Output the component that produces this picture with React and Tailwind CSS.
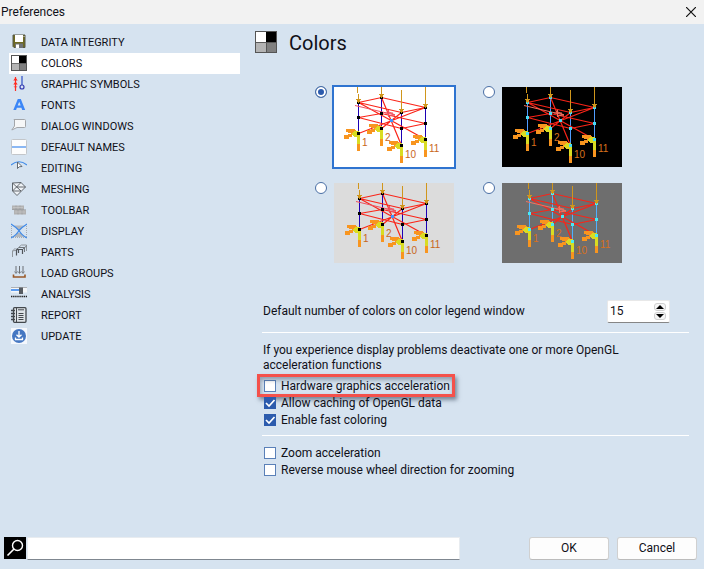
import { useState } from 'react'

function Glyph({ children, size = 16 }) {
  return (
    <svg width={size} height={size} viewBox="0 0 16 16" fill="none" aria-hidden="true" className="shrink-0">
      {children}
    </svg>
  )
}

const FloppyIcon = () => (
  <Glyph>
    <path d="M2 1h12v12.5H3L2 12.500z" fill="#6e6a22" stroke="#56584a" />
    <path d="M4 1h8v7H4z" fill="#fff" />
    <path d="M4 9.500h8V14H4z" fill="#6f7276" />
    <path d="M5 10.500h3V14H5z" fill="#fff" />
    <path d="M12.500 2h1v1h-1z" fill="#ddd" />
  </Glyph>
)

const SwatchIcon = ({ size, dark = '#808080', light = '#b4b4b4' }) => (
  <Glyph size={size}>
    <g shapeRendering="crispEdges">
      <path d="M0 0h16v16H0z" fill="#555" />
      <path d="M1 1h7v7H1z" fill="#fff" />
      <path d="M8 1h7v7H8z" fill="#000" />
      <path d="M1 8h7v7H1z" fill={light} />
      <path d="M8 8h7v7H8z" fill={dark} />
      <path d="M0 8h16M8 8v8" stroke="#555" strokeWidth=".7" />
    </g>
  </Glyph>
)

const SymbolsIcon = () => (
  <Glyph>
    <path d="M4.500 1v14" stroke="#ff2a20" strokeWidth="1.200" />
    <path d="M2.300 4.500 4.500 1.500l2.200 3zM2.300 8.500l2.200-3 2.200 3zM2.500 10.500l2 1.500 2-1.500z" fill="#ff2a20" />
    <path d="M11 0v9" stroke="#7189d6" strokeWidth="2" />
    <circle cx="11" cy="11" r="2" fill="#d8e4f5" stroke="#353bb0" strokeWidth="1.200" />
  </Glyph>
)

const FontIcon = () => (
  <Glyph>
    <path
      fillRule="evenodd"
      d="M2.300 13 6.800 2h3l4.400 11h-3l-.8-2.200H5.900L5.100 13zM6.700 8.600h3L8.200 4.700z"
      fill="#3b86f7"
    />
  </Glyph>
)

const BubbleIcon = () => (
  <Glyph>
    <path d="M3 1.500h10.500a1 1 0 0 1 1 1v6a1 1 0 0 1-1 1H6L.8 12l2.700-4V2z" fill="#f6f7f8" stroke="#a3a6aa" />
  </Glyph>
)

const NamesIcon = () => (
  <Glyph>
    <rect x=".5" y=".5" width="15" height="15" rx="1" fill="#fdfdfd" stroke="#c3c6ca" />
    <path d="M1 8h14" stroke="#8bb8f4" strokeWidth="2" />
  </Glyph>
)

const EditIcon = () => (
  <Glyph>
    <path d="M0 5Q8-1.500 16 5" stroke="#438de8" strokeWidth="1.200" />
    <path d="M6.500 2v6.500l1.700-1.700 2.800-.3z" fill="#fff" stroke="#555b63" strokeWidth=".9" />
  </Glyph>
)

const MeshIcon = () => (
  <Glyph>
    <path d="M2 2h8l4.500 4L6 14.500 1.500 10z" fill="#eef2f6" />
    <path
      d="M1.500 2 10 1.500 14.500 6 6 14.500 1.500 10zM1.500 2 10 10M10 1.500 1.500 10M5.500 6H14.500M2 10h8"
      stroke="#555a60"
      strokeWidth=".9"
    />
  </Glyph>
)

const ToolbarIcon = () => (
  <Glyph>
    <path d="M1 3.500h12V8h2v4.500H3V8H1z" fill="#b2b2b2" />
    <path d="M1 7.500h14M5 3.500v4M9 3.500v4M7 8v4.500M11 8v4.500" stroke="#8e9194" strokeWidth=".5" />
    <path d="M2 5.500h10M4 10h10" stroke="#c8c8c8" strokeWidth=".7" />
  </Glyph>
)

const DisplayIcon = () => (
  <Glyph>
    <path d="M3 2.500h10L9 7H7zM6 10h4l3 4H3z" fill="#b3b8be" />
    <path d="M.5 1v14M15.500 1v14" stroke="#a5abb2" strokeDasharray="1 1" />
    <path d="M0 14.500h16" stroke="#a5abb2" strokeDasharray="1 1" />
    <path d="M0 1Q5.500 4.500 8 7.500 10.500 4.500 16 1M0 15Q6 11.500 8 7.500 10 11.500 16 15" stroke="#3f8ae8" strokeWidth="1.200" />
  </Glyph>
)

const PartsIcon = () => (
  <Glyph>
    <path d="M1.500 13V7l5-1M1.500 7 4.500 4M8 3l2.500-2h5v6" stroke="#90969c" />
    <path d="M5.500 11.500V5.500h6V10M7.500 9V5" stroke="#50555a" strokeWidth="1.200" />
    <path d="M5 5.500 8 3.500h5.500V8M12 5l3.500-3" stroke="#6f757b" />
  </Glyph>
)

const LoadIcon = () => (
  <Glyph>
    <path d="M5 1v7M8.500 1v7M12 1v7" stroke="#6b6f74" />
    <path d="m3.500 6.500 1.500 2 1.500-2M7 6.500l1.500 2 1.500-2M10.500 6.500l1.500 2 1.500-2" stroke="#6b6f74" strokeWidth=".8" />
    <path d="M2.500 9.500V12h11.500V9.500" stroke="#9a5a28" strokeWidth="1.600" />
  </Glyph>
)

const AnalysisIcon = () => (
  <Glyph>
    <path d="M0 1.500h16v5H0z" fill="#f4f6f8" />
    <path d="M0 1.500h16" stroke="#aeb1b5" />
    <path d="M0 4h8" stroke="#5c9cf0" strokeWidth="2" />
    <path d="M8 1.500h4V8H8z" fill="#565b61" />
    <path d="M0 10.500h16" stroke="#222" strokeWidth="1.600" strokeDasharray="1.400 .7" />
  </Glyph>
)

const ReportIcon = () => (
  <Glyph>
    <rect x="2.500" y=".7" width="12.500" height="14.600" rx="1" fill="#dfe4e8" stroke="#43484d" strokeWidth="1.300" />
    <path d="M5.500 1v14" stroke="#43484d" />
    <path d="M7 2.800h6M7.500 6.500h5M7.500 8.500h5M7.500 10.500h5M7.500 12.500h5" stroke="#43484d" />
    <path d="M0 3.500h4M0 6.500h4M0 9.500h4M0 12.500h4" stroke="#43484d" strokeWidth="1.300" />
  </Glyph>
)

const UpdateIcon = () => (
  <Glyph>
    <path d="M0 0h16v16H0z" fill="#f5f8fd" />
    <circle cx="8" cy="8" r="7" fill="#4577c2" />
    <path d="M8 3v6M5.500 6.700 8 9.200l2.500-2.500M4.500 9.500V11.500h7V9.500" stroke="#fff" strokeWidth="1.300" />
  </Glyph>
)

const SECTIONS = [
  ['DATA INTEGRITY', FloppyIcon],
  ['COLORS', SwatchIcon],
  ['GRAPHIC SYMBOLS', SymbolsIcon],
  ['FONTS', FontIcon],
  ['DIALOG WINDOWS', BubbleIcon],
  ['DEFAULT NAMES', NamesIcon],
  ['EDITING', EditIcon],
  ['MESHING', MeshIcon],
  ['TOOLBAR', ToolbarIcon],
  ['DISPLAY', DisplayIcon],
  ['PARTS', PartsIcon],
  ['LOAD GROUPS', LoadIcon],
  ['ANALYSIS', AnalysisIcon],
  ['REPORT', ReportIcon],
  ['UPDATE', UpdateIcon],
]

const THEMES = [
  { name: 'White', bg: '#ffffff', column: '#1c00b4', node: '#000000', center: '#3f97ff', label: '#c8661a', load: '#f0505f', shift: 0 },
  { name: 'Black', bg: '#000000', column: '#4f9dff', node: '#46dcf5', center: '#46dcf5', label: '#d8701c', load: '#f4705f', shift: 1 },
  { name: 'Light gray', bg: '#dcdcdc', column: '#1c00b4', node: '#000000', center: '#3f97ff', label: '#c8661a', load: '#f0505f', shift: 1 },
  { name: 'Dark gray', bg: '#6e6e6e', column: '#4fb0ff', node: '#46ecf5', center: '#46ecf5', label: '#d8701c', load: '#f4705f', shift: 3 },
]

const COLUMNS = [
  { x: 24.5, ys: [15.5, 30.5, 46.5], from: [23.5, 0] },
  { x: 47.5, ys: [10.5, 26.5, 41.5], from: [47.5, 0] },
  { x: 67.5, ys: [25.5, 41.5, 58.5], from: [67.5, 3] },
  { x: 91.5, ys: [20.5, 36.5, 52.5], from: [91.5, 0] },
]

function FramePreview({ theme }) {
  return (
    <svg width="120" height="80" viewBox="0 0 120 80" className="block" aria-hidden="true">
      <path d="M0 0h120v80H0z" fill={theme.bg} />
      <g transform={`translate(${theme.shift} 0)`}>
        {COLUMNS.map(({ x, ys }) => (
          <path key={x} d={`M${x} ${ys[0]}V${ys[2]}`} stroke={theme.column} shapeRendering="crispEdges" />
        ))}
        <path
          d="M67.500 25.500 24.500 15.500 47.500 10.500 91.500 20.500 67.500 25.500M67.500 41.500 24.500 30.500 47.500 26.500 91.500 36.500 67.500 41.500M24.500 15.500 91.500 52.500M47.500 10.500 67.500 58.500M91.500 20.500 24.500 46.500M67.500 25.500 47.500 41.500"
          stroke="#fa2418"
          strokeWidth="1.200"
          fill="none"
        />
        <path d="M21 18.500 61 28M53 24l8 4-7 1M54.500 23v7M51 26h8" stroke={theme.load} fill="none" />
        {COLUMNS.map(({ x, ys }) => (
          <g key={x} transform={`translate(${x - 24.5} ${ys[2] - 46.5})`} shapeRendering="crispEdges">
            <path d="M12 42h8l4 3v2h-5l-7-2z M10 48l8-1v3l-3 .5v1h-5z M23 57h3v7h-3z" fill="#f8951f" />
            <path d="M25 44v6h-5l-3-3 3-3z M23 47h3v10h-3z" fill="#d9dc22" />
          </g>
        ))}
        {COLUMNS.map(({ x, ys, from }) => (
          <g key={x} shapeRendering="crispEdges">
            {ys.map((y) => (
              <path key={y} d={`M${x - 1.5} ${y - 1.5}h3v3h-3z`} fill={theme.node} />
            ))}
            <path d={`M${from[0]} ${from[1]}L${x} ${ys[0] - 3}`} stroke="#d0961c" />
            <path d={`M${x - 2.5} ${ys[0] - 4}h5l-2 4.500h-1z`} fill="#d0961c" />
          </g>
        ))}
        <path d="M56 32h3v3h-3z" fill={theme.center} />
        <g fill={theme.label} fontSize="10" fontFamily="Liberation Sans, Arial, sans-serif">
          <text x="28" y="59">1</text>
          <text x="51" y="54">2</text>
          <text x="71" y="71">10</text>
          <text x="95" y="65">11</text>
        </g>
      </g>
    </svg>
  )
}

function CheckOption({ id, label, defaultChecked = false, highlighted = false }) {
  return (
    <div className="relative flex h-[17px] w-fit items-center">
      <label htmlFor={id} className="flex items-center gap-[5px] whitespace-nowrap">
        <span className="grid size-3 shrink-0">
          <input
            id={id}
            type="checkbox"
            defaultChecked={defaultChecked}
            className="peer col-start-1 row-start-1 size-3 appearance-none border border-[#5a80b8] bg-white checked:border-[#2c5bad] checked:bg-[#2c5bad]"
          />
          <svg
            viewBox="0 0 12 12"
            fill="none"
            aria-hidden="true"
            className="pointer-events-none invisible col-start-1 row-start-1 size-3 peer-checked:visible"
          >
            <path d="m2 6 3 3 5.500-6" stroke="#fff" strokeWidth="1.700" />
          </svg>
        </span>
        <span className="pt-0.5">{label}</span>
      </label>
      {highlighted && (
        <span className="pointer-events-none absolute -inset-y-[3px] -right-[5px] -left-[7px] border-3 border-[#f4514b] shadow-[2px_3px_4px_rgba(60,75,95,0.6),inset_1px_3px_4px_rgba(60,75,95,0.45)]" />
      )}
    </div>
  )
}

const pushButton =
  'h-[23px] w-20 rounded-[3px] border border-[#d0d0d0] border-b-[#bcbcbc] bg-[#fdfdfd] text-center'

const stepButton = 'flex h-2 w-3 items-center justify-center rounded-[3px] border border-[#cfcfcf] bg-[#f6f6f6]'

export default function App() {
  const [section, setSection] = useState('COLORS')
  const [count, setCount] = useState(15)

  return (
    <div className="flex min-h-screen flex-col bg-[#d6e3f0] font-[Roboto,'Noto_Sans',sans-serif] text-xs leading-[15px] text-[#101018]">
      <header className="flex h-6 items-center justify-between bg-[#f2f2f2] pr-[7px] pl-px">
        <h1>Preferences</h1>
        <button type="button" aria-label="Close" className="flex size-3 items-center justify-center">
          <svg width="10" height="10" viewBox="0 0 10 10" aria-hidden="true">
            <path d="m0 0 10 10M10 0 0 10" stroke="#111" strokeWidth="1.200" />
          </svg>
        </button>
      </header>

      <div className="flex flex-1">
        <nav aria-label="Preference sections" className="w-60 shrink-0 pt-2 pl-[9px]">
          {SECTIONS.map(([name, Icon]) => (
            <button
              key={name}
              type="button"
              onClick={() => setSection(name)}
              className={`flex h-[21px] w-full gap-[14px] pt-0.5 pl-0.5 text-left ${section === name ? 'bg-white' : ''}`}
            >
              <Icon />
              <span className="text-[11px] leading-[18px]">{name}</span>
            </button>
          ))}
        </nav>

        <main className="flex-1 pr-[15px] pl-[15px]">
          <div className="flex h-[61px] gap-3 pt-[7px]">
            <SwatchIcon size={22} />
            <h2 className="text-xl leading-6">Colors</h2>
          </div>

          <div className="pl-[7px]">
            <fieldset className="ml-[53px] grid w-fit grid-cols-2 gap-x-[27px] gap-y-3">
              {THEMES.map((theme, i) => (
                <label key={theme.name} className="flex gap-[5px]">
                  <input
                    type="radio"
                    name="theme"
                    aria-label={theme.name}
                    defaultChecked={i === 0}
                    className="peer mt-px size-3 shrink-0 appearance-none rounded-full border border-[#4a6fa5] bg-white checked:bg-[#2c5bad] checked:shadow-[inset_0_0_0_2px_#fff]"
                  />
                  <span className="border-2 border-transparent peer-checked:border-[#2f74d0]">
                    <FramePreview theme={theme} />
                  </span>
                </label>
              ))}
            </fieldset>

            <div className="mt-[35px] flex h-[23px] items-center justify-between pr-[19px] pl-px">
              <label htmlFor="legend-count">Default number of colors on color legend window</label>
              <div className="flex h-[23px] w-[63px] items-center justify-between rounded-xs border border-[#e8e8e8] border-b-[#868686] bg-white pr-[3px] pl-0.5">
                <input
                  id="legend-count"
                  type="text"
                  inputMode="numeric"
                  value={count}
                  onChange={(e) => setCount(Number(e.target.value) || 0)}
                  className="w-9 bg-transparent outline-none"
                />
                <span className="flex flex-col gap-px">
                  <button type="button" aria-label="Increase" className={stepButton} onClick={() => setCount(count + 1)}>
                    <svg width="8" height="4" viewBox="0 0 8 4" className="shrink-0" aria-hidden="true">
                      <path d="M0 4 4 0l4 4z" fill="#000" />
                    </svg>
                  </button>
                  <button type="button" aria-label="Decrease" className={stepButton} onClick={() => setCount(count - 1)}>
                    <svg width="8" height="4" viewBox="0 0 8 4" className="shrink-0" aria-hidden="true">
                      <path d="m0 0 4 4 4-4z" fill="#000" />
                    </svg>
                  </button>
                </span>
              </div>
            </div>

            <section className="mt-[9px] border-t border-white pt-[10px] pb-[7px]">
              <p className="max-w-[370px] pb-1 pl-px">
                If you experience display problems deactivate one or more OpenGL acceleration functions
              </p>
              <div className="flex flex-col pl-0.5">
                <CheckOption id="hardware" label="Hardware graphics acceleration" highlighted />
                <CheckOption id="caching" label="Allow caching of OpenGL data" defaultChecked />
                <CheckOption id="coloring" label="Enable fast coloring" defaultChecked />
              </div>
            </section>

            <section className="flex flex-col border-t border-white pt-2 pl-0.5">
              <CheckOption id="zoom" label="Zoom acceleration" />
              <CheckOption id="wheel" label="Reverse mouse wheel direction for zooming" />
            </section>
          </div>
        </main>
      </div>

      <footer className="flex items-center justify-between pr-[7px] pb-[9px] pl-1">
        <div className="flex max-w-[456px] flex-1 gap-px">
          <label htmlFor="search" aria-label="Search" className="size-[22px] shrink-0 bg-black">
            <svg width="22" height="22" viewBox="0 0 22 22" fill="none" aria-hidden="true">
              <circle cx="13.500" cy="8.500" r="5" stroke="#fff" strokeWidth="1.400" />
              <path d="m10 12-6.500 6.500" stroke="#fff" strokeWidth="1.600" />
            </svg>
          </label>
          <input
            id="search"
            type="text"
            className="h-[23px] min-w-0 flex-1 border border-[#e8ecf0] border-b-[#7f8790] bg-white px-1 outline-none"
          />
        </div>
        <div className="flex gap-2">
          <button type="button" className={pushButton}>OK</button>
          <button type="button" className={pushButton}>Cancel</button>
        </div>
      </footer>
    </div>
  )
}
